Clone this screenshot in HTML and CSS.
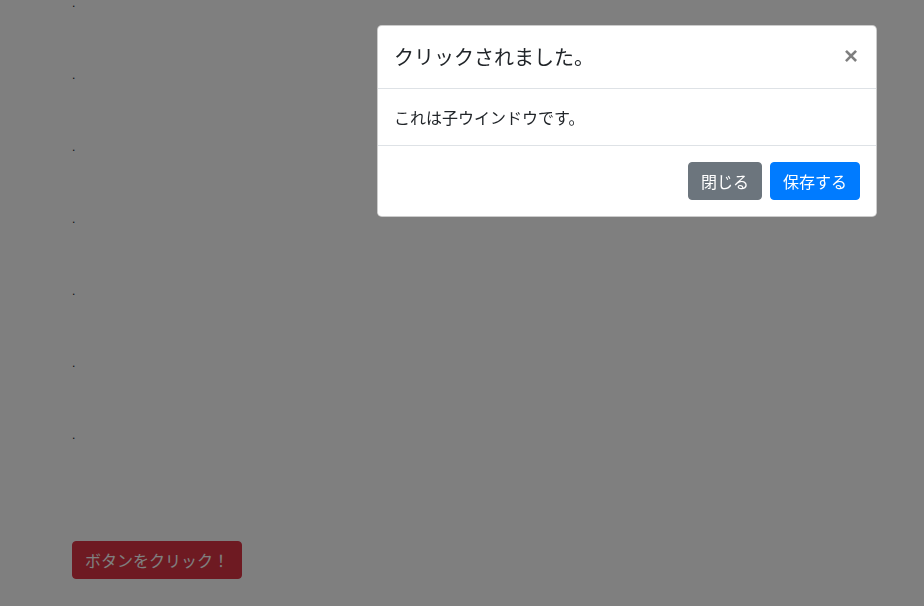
FILE: index.html
```html
<!DOCTYPE html>
<html lang="ja">
<head>
<meta charset="utf-8">
<title>Modal</title>
<link rel="stylesheet" href="styles.css">
</head>
<body>
<main class="page">
  <div class="dots">
    <p>.</p>
    <p>.</p>
    <p>.</p>
    <p>.</p>
    <p>.</p>
    <p>.</p>
    <p>.</p>
  </div>
  <button class="btn btn-danger" type="button">ボタンをクリック！</button>
</main>
<div class="backdrop"></div>
<div class="modal">
  <div class="modal-header">
    <h5 class="modal-title">クリックされました。</h5>
    <button class="close" type="button" aria-label="Close">×</button>
  </div>
  <div class="modal-body">
    <p>これは子ウインドウです。</p>
  </div>
  <div class="modal-footer">
    <button class="btn btn-secondary" type="button">閉じる</button>
    <button class="btn btn-primary" type="button">保存する</button>
  </div>
</div>
</body>
</html>
```

FILE: styles.css
```css
* { box-sizing: border-box; }
html, body { margin: 0; padding: 0; }
body {
  font-family: "Noto Sans CJK JP", "Noto Sans", sans-serif;
  font-size: 16px;
  line-height: 1.5;
  color: #212529;
  background: #fff;
  width: 924px;
  height: 606px;
  overflow: hidden;
}
.page {
  padding-left: 72px;
  display: flex;
  flex-direction: column;
  align-items: flex-start;
}
.dots { margin-top: -9px; }
.dots p {
  margin: 0;
  height: 72px;
  line-height: 24px;
  font-family: "Liberation Sans", sans-serif;
  font-size: 12px;
}
.btn {
  font-family: "Noto Sans CJK JP", sans-serif;
  font-size: 16px;
  line-height: 24px;
  padding: 6px 12px;
  border: 1px solid transparent;
  border-radius: 4px;
  color: #fff;
  cursor: pointer;
  font-weight: 400;
}
.btn-danger {
  margin-top: 46px;
  background: #dc3545;
  border-color: #dc3545;
}
.btn-secondary { background: #6c757d; border-color: #6c757d; }
.btn-primary { background: #007bff; border-color: #007bff; }
.backdrop {
  position: fixed;
  inset: 0;
  background: rgba(0, 0, 0, 0.5);
}
.modal {
  position: absolute;
  left: 377px;
  top: 25px;
  width: 500px;
  background: #fff;
  border: 1px solid rgba(0, 0, 0, 0.2);
  border-radius: 4.8px;
  display: flex;
  flex-direction: column;
}
.modal-header {
  display: flex;
  align-items: flex-start;
  justify-content: space-between;
  padding: 16px;
  border-bottom: 1px solid #dee2e6;
}
.modal-title {
  margin: 0;
  font-size: 20px;
  line-height: 30px;
  font-weight: 400;
}
.close {
  padding: 18px 18px 14px 16px;
  margin: -16px -16px -16px auto;
  background: transparent;
  border: 0;
  font-family: "Liberation Sans", Arial, sans-serif;
  font-size: 24px;
  font-weight: 700;
  line-height: 1;
  color: #000;
  opacity: 0.5;
}
.modal-body { padding: 16px; }
.modal-body p { margin: 0; }
.modal-footer {
  display: flex;
  justify-content: flex-end;
  align-items: center;
  padding: 12px;
  border-top: 1px solid #dee2e6;
}
.modal-footer .btn { margin: 4px; }
```
